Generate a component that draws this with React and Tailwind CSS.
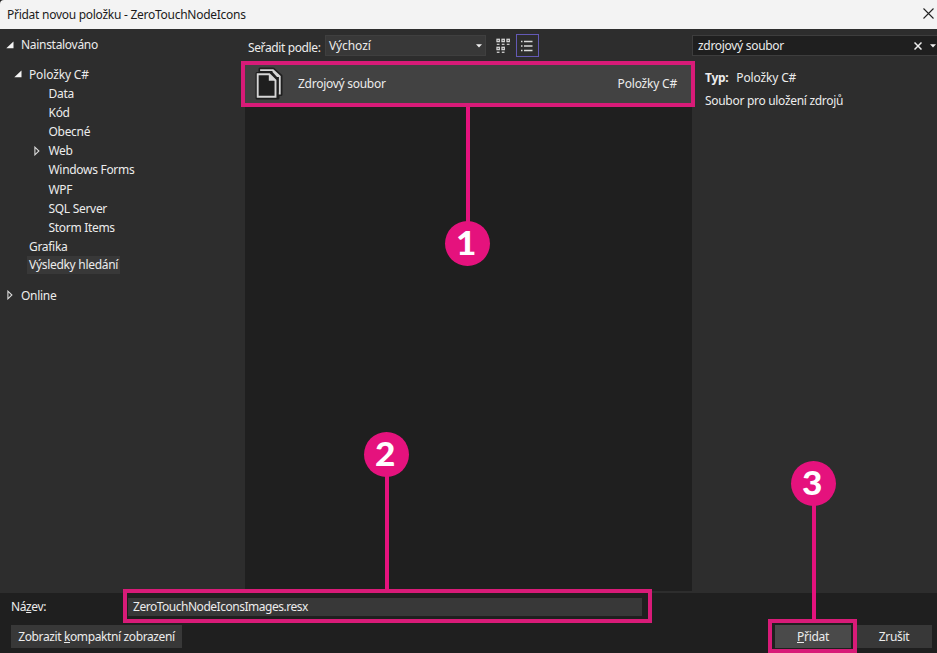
import React from 'react';

const children = ['Data', 'Kód', 'Obecné', 'Web', 'Windows Forms', 'WPF', 'SQL Server', 'Storm Items'];

function Expanded() {
  return (
    <svg className="h-[8px] w-[8px] shrink-0" viewBox="0 0 8 8">
      <path d="M7.5 0.5V7.2H0.3Z" fill="#f5f5f5" />
    </svg>
  );
}

function Collapsed() {
  return (
    <svg className="h-[10px] w-[6px] shrink-0" viewBox="0 0 6 10">
      <path d="M0.9 1.2V8.8L4.9 5Z" fill="none" stroke="#dcdcdc" strokeWidth="1.1" />
    </svg>
  );
}

function CaretDown() {
  return (
    <svg className="h-[4px] w-[6px] shrink-0" viewBox="0 0 6 4">
      <path d="M0 0.3H6L3 3.5Z" fill="#f0f0f0" />
    </svg>
  );
}

function FilesIcon() {
  return (
    <svg className="h-[34px] w-[30px] shrink-0" viewBox="0 0 30 34">
      <path
        d="M3 6.5H6V2H19L27 9V27.5H24V31H3V6.5Z"
        fill="#1f1f1f" stroke="#1f1f1f" strokeWidth="3" strokeLinejoin="round"
      />
      <path d="M7 4V3.2H19L25.8 9.5V26.5H24.8" fill="none" stroke="#d6d6d6" strokeWidth="1.8" />
      <path d="M18.5 2.5V5L23 10H26.5Z" fill="#d6d6d6" />
      <path d="M3.7 7.3H15.3L21.5 13.3V29.8H3.7Z" fill="#1f1f1f" stroke="#d6d6d6" strokeWidth="1.9" />
      <path d="M14.8 7V13.8H21.7Z" fill="#d6d6d6" />
    </svg>
  );
}

function GridIcon() {
  return (
    <svg className="h-[16px] w-[14px] shrink-0" viewBox="0 0 14 16">
      <g fill="none" stroke="#d4d4d4" strokeWidth="1.3">
        <rect x="1" y="1.3" width="2.3" height="2.3" />
        <rect x="6" y="1.3" width="2.3" height="2.3" />
        <rect x="11" y="1.3" width="2.3" height="2.3" />
        <rect x="1" y="9.3" width="2.3" height="2.3" />
        <rect x="6" y="9.3" width="2.3" height="2.3" />
      </g>
      <g fill="#c4c4c4">
        <rect x="0.8" y="5.7" width="2.7" height="1.3" />
        <rect x="5.8" y="5.7" width="2.7" height="1.3" />
        <rect x="10.8" y="5.7" width="2.7" height="1.3" />
        <rect x="0.8" y="13.6" width="2.7" height="1.4" />
        <rect x="5.8" y="13.6" width="2.7" height="1.4" />
      </g>
    </svg>
  );
}

function ListIcon() {
  return (
    <svg className="mr-[1px] h-[12px] w-[12px] shrink-0" viewBox="0 0 12 12">
      <path d="M0 1.5H1.5M3 1.5H11.5M0 6H1.5M3 6H11.5M0 10.5H1.5M3 10.5H11.5" stroke="#d8d8d8" strokeWidth="1.3" />
    </svg>
  );
}

function Badge({ n, place }) {
  return (
    <div className={'absolute flex h-[45px] w-[45px] items-center justify-center rounded-full bg-[#e5127d] ' + place}>
      <span className="mt-[-2px] mr-[2px] scale-x-110 font-['Lato',sans-serif] text-[32px] leading-none font-black tracking-normal text-white">{n}</span>
    </div>
  );
}

export default function App() {
  return (
    <div className="relative flex h-[653px] w-[937px] flex-col overflow-hidden bg-[#1f1f1f] font-['Noto_Sans',sans-serif] text-[12px] leading-[19px] tracking-[-0.3px] whitespace-nowrap text-[#ececec]">
      <header className="flex h-[29px] shrink-0 items-center justify-between rounded-tl-[4px] bg-[#f3f3f3] pr-[3px] pl-[7px] text-[#1b1b1b]">
        <span className="tracking-[-0.27px]">Přidat novou položku - ZeroTouchNodeIcons</span>
        <svg className="mt-[-2px] h-[11px] w-[11px]" viewBox="0 0 11 11">
          <path d="M0.5 0.5L10.5 10.5M10.5 0.5L0.5 10.5" stroke="#222" strokeWidth="1.1" />
        </svg>
      </header>

      <div className="flex h-[564px] shrink-0 bg-[#2d2d2d]">
        <nav className="w-[245px] shrink-0 pt-[6px]">
          <div className="flex h-[19px] items-center pl-[6px]">
            <Expanded />
            <span className="ml-[7px]">Nainstalováno</span>
          </div>
          <div className="mt-[10.8px] flex h-[19px] items-center pl-[14px]">
            <Expanded />
            <span className="ml-[7px] tracking-[-0.15px]">Položky C#</span>
          </div>
          {children.map((name) => (
            <div key={name} className="flex h-[19.15px] items-center">
              <span className="flex w-[48.5px] pl-[34px]">{name === 'Web' && <Collapsed />}</span>
              <span>{name}</span>
            </div>
          ))}
          <div className="flex h-[19px] items-center pl-[29px]">Grafika</div>
          <div className="flex h-[19px] items-center pl-[27px]">
            <span className="h-[18px] w-[93px] bg-[#383838] pl-[2px] leading-[18px]">Výsledky hledání</span>
          </div>
          <div className="mt-[11px] flex h-[19px] items-center pl-[7px]">
            <Collapsed />
            <span className="ml-[8px]">Online</span>
          </div>
        </nav>

        <main className="flex w-[447px] shrink-0 flex-col">
          <div className="flex h-[33px] shrink-0 items-center pl-[3px]">
            <span className="w-[77px] pt-[3px] tracking-[-0.38px]">Seřadit podle:</span>
            <div className="flex h-[21px] w-[161px] items-center justify-between border border-[#3f3f3f] bg-[#383838] pr-[3px] pl-[3px]">
              <span className="tracking-[-0.1px]">Výchozí</span>
              <CaretDown />
            </div>
            <div className="ml-[10px] flex"><GridIcon /></div>
            <div className="ml-[6px] flex h-[23px] w-[23px] items-center justify-center border border-[#6359b5]">
              <ListIcon />
            </div>
          </div>
          <div className="h-[529px] bg-[#1f1f1f] pt-[2px]">
            <div className="flex h-[40px] items-center bg-[#424242] pr-[15px] pl-[9px]">
              <FilesIcon />
              <span className="mt-[-2px] ml-[14px] grow tracking-[-0.27px]">Zdrojový soubor</span>
              <span className="mt-[-2px] tracking-[-0.2px]">Položky C#</span>
            </div>
          </div>
        </main>

        <aside className="min-w-0 flex-1 pt-[6px]">
          <div className="flex h-[21px] items-center border border-r-0 border-[#3d3d3d] bg-[#1f1f1f] pr-[1px] pl-[5px]">
            <span className="grow">zdrojový soubor</span>
            <svg className="h-[8px] w-[8px]" viewBox="0 0 8 8">
              <path d="M0.5 0.5L7.5 7.5M7.5 0.5L0.5 7.5" stroke="#eee" strokeWidth="1.5" />
            </svg>
            <span className="ml-[8px]"><CaretDown /></span>
          </div>
          <div className="mt-[12px] pl-[13px]">
            <b className="mr-[8px]">Typ:</b>
            <span className="tracking-[-0.15px]">Položky C#</span>
          </div>
          <div className="mt-[4px] pl-[13px]">Soubor pro uložení zdrojů</div>
        </aside>
      </div>

      <footer className="flex h-[60px] shrink-0 flex-col bg-[#1f1f1f]">
        <div className="flex h-[31px] shrink-0 items-center pl-[11px]">
          <span className="mt-[-4px] w-[117px] tracking-[-0.4px]">Ná<u className="underline-offset-1">z</u>ev:</span>
          <div className="mt-[-3px] h-[18px] w-[514px] bg-[#383838] pl-[5px] leading-[18px] tracking-[-0.48px]">ZeroTouchNodeIconsImages.resx</div>
        </div>
        <div className="flex h-[24px] items-center pr-[5px] pl-[11px]">
          <div className="flex h-[23px] w-[171px] items-center justify-center bg-[#383838]">
            <span className="tracking-[-0.38px]">Zobrazit <u className="underline-offset-1">k</u>ompaktní zobrazení</span>
          </div>
          <div className="ml-auto flex h-[23px] w-[76px] items-center justify-center bg-[#4a4a4a]">
            <span><u className="underline-offset-1">P</u>řidat</span>
          </div>
          <div className="ml-[5px] flex h-[23px] w-[76px] items-center justify-center bg-[#383838]">Zrušit</div>
        </div>
      </footer>

      <div className="absolute top-[61px] left-[241px] h-[46px] w-[454px] border-4 border-[#d81b78]" />
      <div className="absolute top-[107px] left-[466px] h-[120px] w-[4px] bg-[#e5127d]" />
      <Badge n="1" place="top-[221px] left-[445px]" />

      <div className="absolute top-[589px] left-[123px] h-[34px] w-[529px] border-4 border-[#d81b78]" />
      <div className="absolute top-[470px] left-[385px] h-[120px] w-[4px] bg-[#e5127d]" />
      <Badge n="2" place="top-[432px] left-[364px]" />

      <div className="absolute top-[619px] left-[768px] h-[34px] w-[89px] border-4 border-[#d81b78]" />
      <div className="absolute top-[500px] left-[812px] h-[120px] w-[4px] bg-[#e5127d]" />
      <Badge n="3" place="top-[461px] left-[791px]" />
    </div>
  );
}
